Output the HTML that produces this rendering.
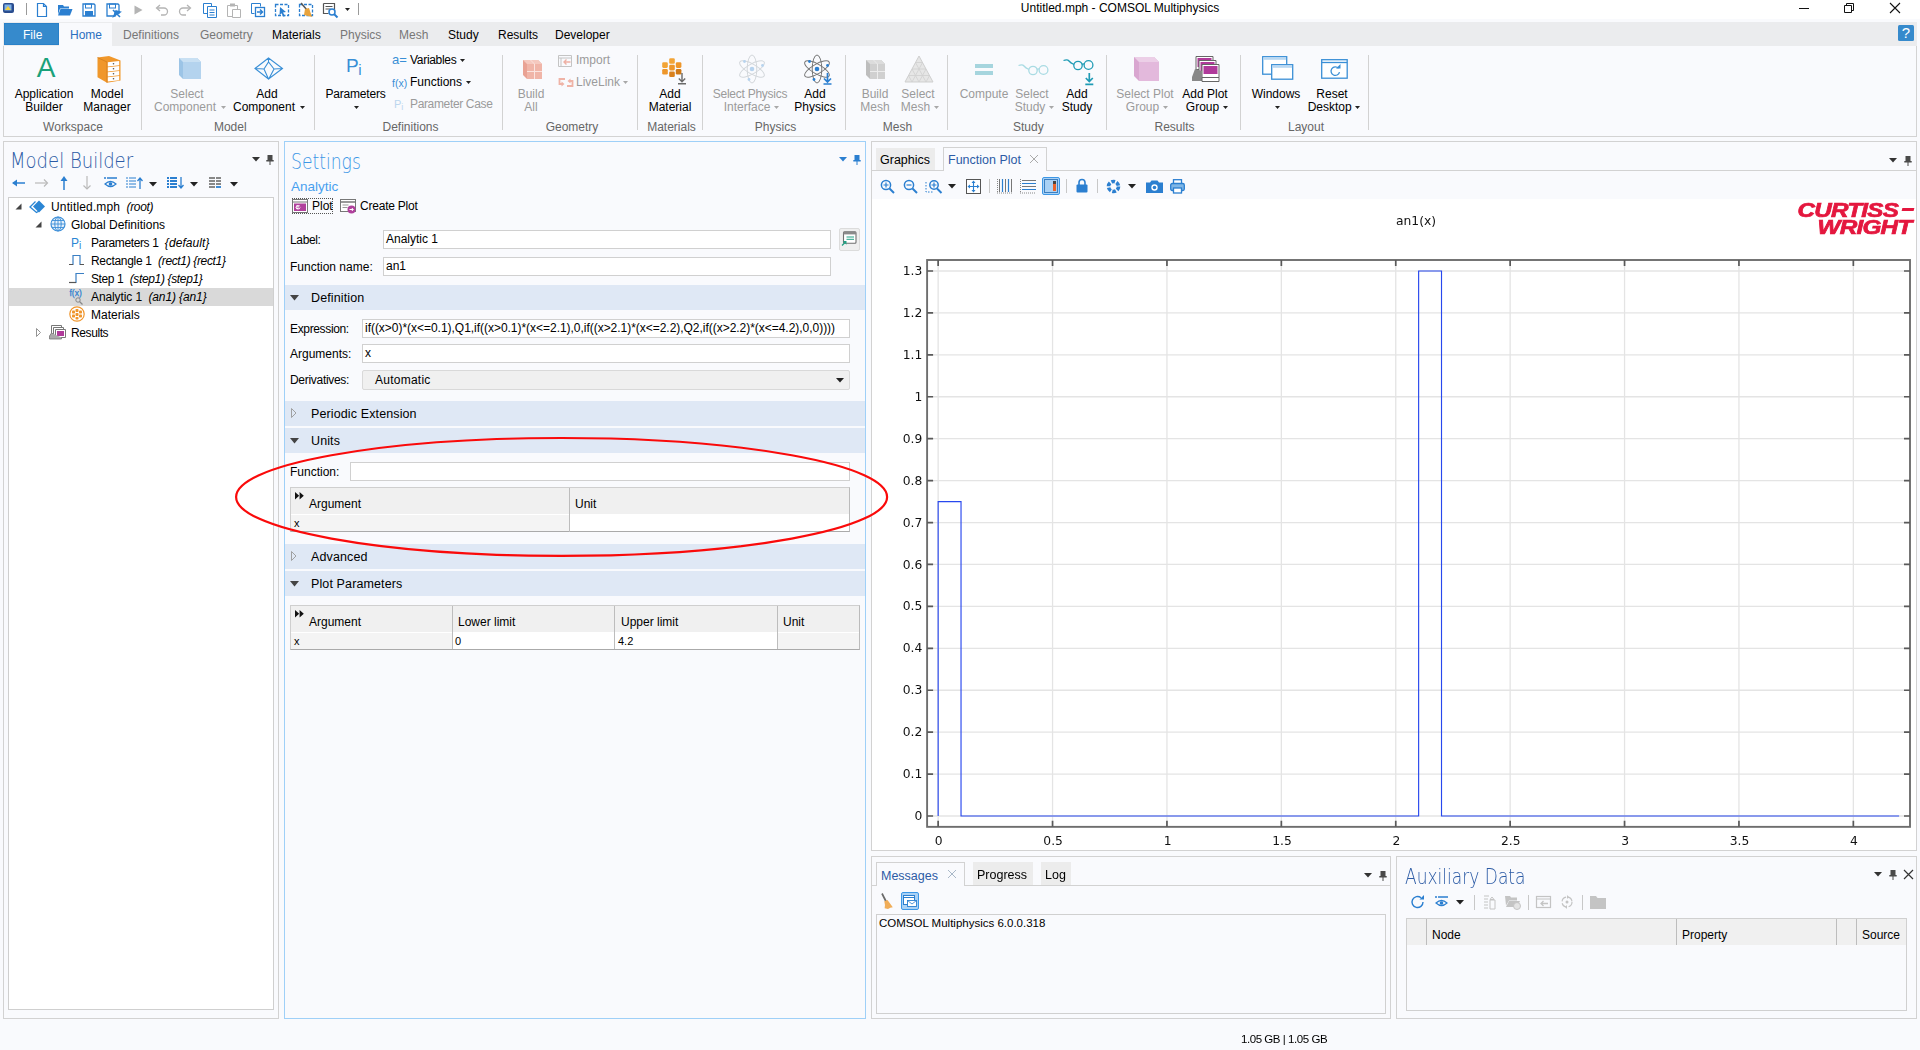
<!DOCTYPE html>
<html><head><meta charset="utf-8"><title>Untitled.mph - COMSOL Multiphysics</title>
<style>
*{box-sizing:border-box;margin:0;padding:0}
html,body{width:1920px;height:1050px;overflow:hidden}
body{background:#f9fafd;font-family:"Liberation Sans",sans-serif;font-size:12px;color:#000;position:relative}
.a{position:absolute;white-space:nowrap}
.t{position:absolute;white-space:nowrap;line-height:14px;height:14px}
.c{text-align:center}
.g{color:#9b9b9b}
.gl{color:#666}
.box{position:absolute;border:1px solid #d0d0d0}
.sep{position:absolute;width:1px;background:#d4d4d4}
.band{position:absolute;left:285px;width:580px;background:#dfe8f5}
.inp{position:absolute;background:#fff;border:1px solid #d0d0d0}
.hdr{position:absolute;background:#f0f0f0}
svg{position:absolute;overflow:visible}
.ttl{position:absolute;white-space:nowrap;font-family:"DejaVu Sans","Liberation Sans",sans-serif;font-weight:200;font-size:20.5px;line-height:26px;transform-origin:left center}
.t i{letter-spacing:-0.35px;margin-left:3px}
.dj{font-family:"DejaVu Sans",sans-serif}
</style></head>
<body>
<div class="a" style="left:0px;top:0px;width:1920px;height:19px;background:#fff"></div>
<div class="t c " style="left:1020px;width:200px;top:1px;font-size:12px">Untitled.mph - COMSOL Multiphysics</div>
<svg style="left:1799px;top:3px" width="10" height="10" viewBox="0 0 10 10"><path d="M0 5.5h10" stroke="#111" stroke-width="1"/></svg>
<svg style="left:1844px;top:3px" width="10" height="10" viewBox="0 0 10 10"><path d="M0.5 2.5h7v7h-7z M2.5 2.5v-2h7v7h-2" fill="none" stroke="#111" stroke-width="1"/></svg>
<svg style="left:1890px;top:3px" width="10" height="10" viewBox="0 0 10 10"><path d="M0 0l10 10M10 0l-10 10" stroke="#111" stroke-width="1.1"/></svg>
<svg style="left:3px;top:3px" width="12" height="11" viewBox="0 0 12 11"><rect x="0" y="0" width="11" height="10" rx="2" fill="#2a4d8f"/><rect x="1.5" y="1.5" width="7" height="6" fill="#7fb2e8"/><path d="M2 7l3-4 3 4z" fill="#f0d040"/></svg>
<div class="a" style="left:26px;top:3px;width:1px;height:12px;background:#9a9a9a"></div>
<div class="a" style="left:358px;top:3px;width:1px;height:12px;background:#9a9a9a"></div>
<svg style="left:34px;top:2px" width="16" height="16" viewBox="0 0 16 16"><path d="M3.5 1.5h6l3 3v10h-9z M9.5 1.5v3h3" fill="#fff" stroke="#2b7fd0" stroke-width="1.2"/></svg>
<svg style="left:57px;top:2px" width="16" height="16" viewBox="0 0 16 16"><path d="M1 3h5l1 1.5h5v2h-9l-2 6z" fill="#2b7fd0"/><path d="M3.5 7h12l-2.5 6.5h-12z" fill="#2b7fd0"/></svg>
<svg style="left:81px;top:2px" width="16" height="16" viewBox="0 0 16 16"><path d="M2 2h11l1 1v11h-12z" fill="#fff" stroke="#2b7fd0" stroke-width="1.3"/><rect x="4.5" y="2" width="6" height="4" fill="none" stroke="#2b7fd0"/><rect x="4" y="9" width="8" height="5" fill="#2b7fd0"/></svg>
<svg style="left:105px;top:2px" width="16" height="16" viewBox="0 0 16 16"><path d="M2 2h11l1 1v8h-4v3h-8z" fill="#fff" stroke="#2b7fd0" stroke-width="1.3"/><rect x="4.5" y="2" width="6" height="4" fill="none" stroke="#2b7fd0"/><path d="M8 8l7 7M9 14l2-5 4 1z" stroke="#2b7fd0" stroke-width="1.6" fill="#2b7fd0"/></svg>
<svg style="left:130px;top:2px" width="16" height="16" viewBox="0 0 16 16"><path d="M4.5 3.5l8 4.5-8 4.5z" fill="#b4b4b4"/></svg>
<svg style="left:154px;top:2px" width="16" height="16" viewBox="0 0 16 16"><path d="M3 6h7a3.5 3.5 0 0 1 0 7h-3" fill="none" stroke="#b4b4b4" stroke-width="1.3"/><path d="M6 3l-3.5 3 3.5 3" fill="none" stroke="#b4b4b4" stroke-width="1.3"/></svg>
<svg style="left:177px;top:2px" width="16" height="16" viewBox="0 0 16 16"><path d="M13 6h-7a3.5 3.5 0 0 0 0 7h3" fill="none" stroke="#b4b4b4" stroke-width="1.3"/><path d="M10 3l3.5 3-3.5 3" fill="none" stroke="#b4b4b4" stroke-width="1.3"/></svg>
<svg style="left:202px;top:2px" width="16" height="16" viewBox="0 0 16 16"><path d="M1.5 1.5h8v10h-8z" fill="#fff" stroke="#2b7fd0"/><path d="M5.5 4.500h9v11h-9z" fill="#fff" stroke="#2b7fd0"/><path d="M7.500 8h5M7.500 10.500h5M7.500 13h5" stroke="#2b7fd0"/></svg>
<svg style="left:226px;top:2px" width="16" height="16" viewBox="0 0 16 16"><path d="M1.5 3.500h10v11h-10z" fill="#fff" stroke="#b4b4b4"/><rect x="4" y="1.500" width="5" height="3" fill="#b4b4b4"/><path d="M6.500 7.500h8v8h-8z" fill="#fff" stroke="#b4b4b4"/></svg>
<svg style="left:250px;top:2px" width="16" height="16" viewBox="0 0 16 16"><path d="M1.5 1.5h9v3M1.500 1.500v10h3" fill="none" stroke="#2b7fd0"/><rect x="5.500" y="5.500" width="9" height="9" fill="#fff" stroke="#2b7fd0" stroke-width="1.3"/><path d="M7 10h5M10 7.500l2.500 2.500-2.500 2.500" fill="none" stroke="#2b7fd0" stroke-width="1.5"/></svg>
<svg style="left:274px;top:2px" width="16" height="16" viewBox="0 0 16 16"><rect x="1.5" y="2.500" width="13" height="11" fill="none" stroke="#2b7fd0" stroke-width="1.3" stroke-dasharray="3 1.500"/><path d="M6 5l6 5-3 .5 2 3.500-1.500.8-2-3.500-2 2z" fill="#2b7fd0"/></svg>
<svg style="left:298px;top:2px" width="16" height="16" viewBox="0 0 16 16"><rect x="1.5" y="2.500" width="13" height="11" fill="none" stroke="#2b7fd0" stroke-width="1.3" stroke-dasharray="3 1.500"/><path d="M3 1l6 7" stroke="#555" stroke-width="1.5"/><path d="M7 7l4-1 3 9-8-2z" fill="#e8a33c"/></svg>
<svg style="left:322px;top:2px" width="16" height="16" viewBox="0 0 16 16"><path d="M1.5 1.500h11v7M1.500 1.500v10h5" fill="none" stroke="#555" stroke-width="1.2"/><path d="M3.500 4.500h7M3.500 7h5" stroke="#555"/><circle cx="10" cy="10" r="3" fill="#fff" stroke="#2b7fd0" stroke-width="1.5"/><path d="M12 12l3.500 3.500" stroke="#2b7fd0" stroke-width="2"/></svg>
<svg style="left:345px;top:8px" width="5" height="3" viewBox="0 0 5 3"><path d="M0 0h5l-2.5 3z" fill="#222"/></svg>
<div class="a" style="left:3px;top:22px;width:1914px;height:24px;background:#ebecee"></div>
<div class="a" style="left:4px;top:23px;width:55px;height:22px;background:#368acc;border:1px solid #2a81c8"></div>
<div class="a" style="left:59px;top:23px;width:53px;height:23px;background:#f9fafd"></div>
<div class="t " style="left:23px;top:28px;font-size:12px;color:#fff;">File</div>
<div class="t " style="left:70px;top:28px;font-size:12px;color:#2b6fc0;">Home</div>
<div class="t " style="left:123px;top:28px;font-size:12px;color:#777;">Definitions</div>
<div class="t " style="left:200px;top:28px;font-size:12px;color:#777;">Geometry</div>
<div class="t " style="left:272px;top:28px;font-size:12px;">Materials</div>
<div class="t " style="left:340px;top:28px;font-size:12px;color:#777;">Physics</div>
<div class="t " style="left:399px;top:28px;font-size:12px;color:#777;">Mesh</div>
<div class="t " style="left:448px;top:28px;font-size:12px;">Study</div>
<div class="t " style="left:498px;top:28px;font-size:12px;">Results</div>
<div class="t " style="left:555px;top:28px;font-size:12px;">Developer</div>
<div class="a" style="left:1898px;top:25px;width:16px;height:16px;background:#368acc;border-radius:1.5px"></div>
<div class="t c" style="left:1898px;top:26px;color:#fff;width:16px;font-size:15px;line-height:16px;height:16px;top:25px">?</div>
<div class="a" style="left:3px;top:46px;width:1914px;height:91px;background:#f9fafd;border:1px solid #d3d3d3;border-top:none"></div>
<div class="a" style="left:141px;top:55px;width:1px;height:75px;background:#d2d2d2"></div>
<div class="a" style="left:314px;top:55px;width:1px;height:75px;background:#d2d2d2"></div>
<div class="a" style="left:502px;top:55px;width:1px;height:75px;background:#d2d2d2"></div>
<div class="a" style="left:637px;top:55px;width:1px;height:75px;background:#d2d2d2"></div>
<div class="a" style="left:702px;top:55px;width:1px;height:75px;background:#d2d2d2"></div>
<div class="a" style="left:845px;top:55px;width:1px;height:75px;background:#d2d2d2"></div>
<div class="a" style="left:947px;top:55px;width:1px;height:75px;background:#d2d2d2"></div>
<div class="a" style="left:1106px;top:55px;width:1px;height:75px;background:#d2d2d2"></div>
<div class="a" style="left:1240px;top:55px;width:1px;height:75px;background:#d2d2d2"></div>
<div class="a" style="left:1368px;top:55px;width:1px;height:75px;background:#d2d2d2"></div>
<div class="t c gl" style="left:-27px;width:200px;top:120px;">Workspace</div>
<div class="t c gl" style="left:130.3px;width:200px;top:120px;">Model</div>
<div class="t c gl" style="left:310.5px;width:200px;top:120px;">Definitions</div>
<div class="t c gl" style="left:472px;width:200px;top:120px;">Geometry</div>
<div class="t c gl" style="left:571.5px;width:200px;top:120px;">Materials</div>
<div class="t c gl" style="left:675.5px;width:200px;top:120px;">Physics</div>
<div class="t c gl" style="left:797.5px;width:200px;top:120px;">Mesh</div>
<div class="t c gl" style="left:928.3px;width:200px;top:120px;">Study</div>
<div class="t c gl" style="left:1074.5px;width:200px;top:120px;">Results</div>
<div class="t c gl" style="left:1206px;width:200px;top:120px;">Layout</div>
<div class="t c " style="left:-56px;width:200px;top:87px;">Application</div>
<div class="t c " style="left:-56px;width:200px;top:100px;">Builder</div>
<div class="t c " style="left:7px;width:200px;top:87px;">Model</div>
<div class="t c " style="left:7px;width:200px;top:100px;">Manager</div>
<div class="t c g" style="left:87px;width:200px;top:87px;">Select</div>
<div class="t c g" style="left:85px;width:200px;top:100px;">Component</div>
<div class="t c " style="left:167px;width:200px;top:87px;">Add</div>
<div class="t c " style="left:164px;width:200px;top:100px;">Component</div>
<div class="t c " style="left:255.5px;width:200px;top:87px;letter-spacing:-0.2px">Parameters</div>
<div class="t c g" style="left:431px;width:200px;top:87px;">Build</div>
<div class="t c g" style="left:431px;width:200px;top:100px;">All</div>
<div class="t c " style="left:570px;width:200px;top:87px;">Add</div>
<div class="t c " style="left:570px;width:200px;top:100px;">Material</div>
<div class="t c g" style="left:650px;width:200px;top:87px;letter-spacing:-0.25px">Select Physics</div>
<div class="t c g" style="left:647px;width:200px;top:100px;">Interface</div>
<div class="t c " style="left:715px;width:200px;top:87px;">Add</div>
<div class="t c " style="left:715px;width:200px;top:100px;">Physics</div>
<div class="t c g" style="left:775px;width:200px;top:87px;">Build</div>
<div class="t c g" style="left:775px;width:200px;top:100px;">Mesh</div>
<div class="t c g" style="left:818px;width:200px;top:87px;">Select</div>
<div class="t c g" style="left:815.5px;width:200px;top:100px;">Mesh</div>
<div class="t c g" style="left:884px;width:200px;top:87px;">Compute</div>
<div class="t c g" style="left:932px;width:200px;top:87px;">Select</div>
<div class="t c g" style="left:930px;width:200px;top:100px;">Study</div>
<div class="t c " style="left:977px;width:200px;top:87px;">Add</div>
<div class="t c " style="left:977px;width:200px;top:100px;">Study</div>
<div class="t c g" style="left:1045px;width:200px;top:87px;">Select Plot</div>
<div class="t c g" style="left:1042.5px;width:200px;top:100px;">Group</div>
<div class="t c " style="left:1105px;width:200px;top:87px;">Add Plot</div>
<div class="t c " style="left:1102.5px;width:200px;top:100px;">Group</div>
<div class="t c " style="left:1176px;width:200px;top:87px;">Windows</div>
<div class="t c " style="left:1232px;width:200px;top:87px;">Reset</div>
<div class="t c " style="left:1229.7px;width:200px;top:100px;">Desktop</div>
<svg style="left:221px;top:106px" width="5" height="3" viewBox="0 0 5 3"><path d="M0 0h5l-2.5 3z" fill="#a8a8a8"/></svg>
<svg style="left:300px;top:106px" width="5" height="3" viewBox="0 0 5 3"><path d="M0 0h5l-2.5 3z" fill="#222"/></svg>
<svg style="left:353.5px;top:106px" width="5" height="3" viewBox="0 0 5 3"><path d="M0 0h5l-2.5 3z" fill="#222"/></svg>
<svg style="left:774px;top:106px" width="5" height="3" viewBox="0 0 5 3"><path d="M0 0h5l-2.5 3z" fill="#a8a8a8"/></svg>
<svg style="left:933.5px;top:106px" width="5" height="3" viewBox="0 0 5 3"><path d="M0 0h5l-2.5 3z" fill="#a8a8a8"/></svg>
<svg style="left:1048.5px;top:106px" width="5" height="3" viewBox="0 0 5 3"><path d="M0 0h5l-2.5 3z" fill="#a8a8a8"/></svg>
<svg style="left:1163px;top:106px" width="5" height="3" viewBox="0 0 5 3"><path d="M0 0h5l-2.5 3z" fill="#a8a8a8"/></svg>
<svg style="left:1223px;top:106px" width="5" height="3" viewBox="0 0 5 3"><path d="M0 0h5l-2.5 3z" fill="#222"/></svg>
<svg style="left:1275px;top:106px" width="5" height="3" viewBox="0 0 5 3"><path d="M0 0h5l-2.5 3z" fill="#222"/></svg>
<svg style="left:1355px;top:106px" width="5" height="3" viewBox="0 0 5 3"><path d="M0 0h5l-2.5 3z" fill="#222"/></svg>
<div class="t " style="left:410px;top:53px;letter-spacing:-0.3px">Variables</div>
<svg style="left:460px;top:59px" width="5" height="3" viewBox="0 0 5 3"><path d="M0 0h5l-2.5 3z" fill="#222"/></svg>
<div class="t " style="left:410px;top:75px;">Functions</div>
<svg style="left:466px;top:81px" width="5" height="3" viewBox="0 0 5 3"><path d="M0 0h5l-2.5 3z" fill="#222"/></svg>
<div class="t g" style="left:410px;top:97px;letter-spacing:-0.35px">Parameter Case</div>
<div class="t g" style="left:576px;top:53px;">Import</div>
<div class="t g" style="left:576px;top:75px;">LiveLink</div>
<svg style="left:623px;top:81px" width="5" height="3" viewBox="0 0 5 3"><path d="M0 0h5l-2.5 3z" fill="#a8a8a8"/></svg>
<div class="a" style="left:31px;top:52px;width:30px;text-align:center;font-size:28px;line-height:32px;color:#1aa17a">A</div>
<svg style="left:97px;top:56px" width="24" height="27" viewBox="0 0 24 27"><path d="M.5 1.500l11.500-1.500 11.500 4.500v20l-13.500 2.300-9.500-5.500z" fill="#f0972b"/><path d="M.5 1.500l9.500 4.500v20.800" fill="none" stroke="#d07a18" stroke-width=".7"/><path d="M10.800 6.3l11.400-1.300v4.200l-11.400 1.300z" fill="#fff"/><circle cx="16.500" cy="7.8" r=".8" fill="#555"/><path d="M10.800 11.3l11.400-1.300v4.200l-11.400 1.300z" fill="#fff"/><circle cx="16.500" cy="12.8" r=".8" fill="#555"/><path d="M10.800 16.3l11.400-1.300v4.200l-11.400 1.300z" fill="#fff"/><circle cx="16.500" cy="17.8" r=".8" fill="#555"/><path d="M10.800 21.3l11.400-1.300v4.200l-11.400 1.300z" fill="#fff"/><circle cx="16.500" cy="22.8" r=".8" fill="#555"/></svg>
<svg style="left:179px;top:58px" width="22" height="21" viewBox="0 0 22 21"><path d="M0 0h18l4 4v17h-18l-4 -4z" fill="#9cc4e6"/><path d="M0 0h18l4 4h-18z" fill="#c9e0f3"/><rect x="4" y="4" width="18" height="17" fill="#b4d3ee"/></svg>
<svg style="left:254px;top:57px" width="30" height="23" viewBox="0 0 30 23"><path d="M1 11.500l13.500-10.500 14 10.500-14 10.500z M1 11.500l9 .5M10 12l4.500-7 5.500 7-5.500 10.500M10 12l4.500 10M14.500 1v4M20 12l8.500-.5" fill="none" stroke="#3a8fd6" stroke-width="1.100"/></svg>
<div class="a" style="left:346px;top:54px;font-size:19px;line-height:24px;color:#3a8fd6">P<span style="font-size:15px;position:relative;top:3px;left:-0.5px">i</span></div>
<div class="a" style="left:392px;top:52px;font-size:13px;line-height:16px;color:#3a8fd6">a=</div>
<div class="a" style="left:392px;top:76px;font-size:10.5px;line-height:14px;color:#3a8fd6">f(x)</div>
<div class="a" style="left:394px;top:97px;font-size:11px;line-height:14px;color:#bcd6ee">P<span style="font-size:9px;position:relative;top:2px">i</span></div>
<svg style="left:523px;top:60px" width="19" height="19" viewBox="0 0 19 19"><path d="M0 0h15l4 4v15h-15l-4 -4z" fill="#e9a294"/><path d="M0 0h15l4 4h-15z" fill="#f5c9bf"/><rect x="4" y="4" width="15" height="15" fill="#f0b5a8"/><path d="M11.5 4v15M4 11.5h15" stroke="#fbe4df" stroke-width="1" fill="none"/><path d="M7.5 0l4 4M0 0" stroke="#fbe4df" stroke-width=".8" fill="none"/></svg>
<svg style="left:558px;top:55px" width="14" height="12" viewBox="0 0 14 12"><path d="M.5 .500h13v11h-13z M.500 3h13M3 3v8.500" fill="none" stroke="#c4c4c4"/><path d="M12.500 7h-6M8.500 4.500l-2.500 2.500 2.500 2.500" fill="none" stroke="#eeb0a4" stroke-width="1.400"/></svg>
<svg style="left:558px;top:77px" width="16" height="11" viewBox="0 0 16 11"><path d="M7 2h-5.500v5h2.500M9 9h5.500v-5h-2.500" fill="none" stroke="#efb3a6" stroke-width="1.800"/><path d="M3.500 4.500l3 2.500-3 2.500zM12.500 1.500l-3 2.500 3 2.500z" fill="#efb3a6"/></svg>
<svg style="left:662px;top:58px" width="26" height="27" viewBox="0 0 26 27"><rect x="7.2" y="0.2" width="5.600" height="5.600" rx="1.300" fill="#f2a436"/><rect x="7.2" y="6.8" width="5.600" height="5.600" rx="1.300" fill="#ee962a"/><rect x="7.2" y="13.5" width="5.600" height="5.600" rx="1.300" fill="#d9801c"/><rect x="0.2" y="4.3" width="5.600" height="5.600" rx="1.300" fill="#f2a436"/><rect x="0.2" y="11.0" width="5.600" height="5.600" rx="1.300" fill="#ee962a"/><rect x="13.8" y="4.3" width="5.600" height="5.600" rx="1.300" fill="#ee962a"/><rect x="13.8" y="11.0" width="5.600" height="5.600" rx="1.300" fill="#cf7816"/><path d="M20 15v8.500M16.800 20.500l3.200 3.200 3.200-3.200M16 25.800h8" stroke="#6a6a6a" stroke-width="1.400" fill="none"/></svg>
<svg style="left:738px;top:54px" width="30" height="30" viewBox="0 0 30 30"><g fill="none" stroke="#d3d7db" stroke-width="1"><ellipse cx="14" cy="15" rx="4.800" ry="14"/><ellipse cx="14" cy="15" rx="4.800" ry="14" transform="rotate(60 14 15)"/><ellipse cx="14" cy="15" rx="4.800" ry="14" transform="rotate(-60 14 15)"/></g><circle cx="14" cy="15" r="2.300" fill="#b7d3ee"/><circle cx="6.500" cy="7.500" r="1.400" fill="#b7d3ee"/><circle cx="24.500" cy="11.500" r="1.400" fill="#b7d3ee"/><circle cx="11" cy="25.500" r="1.400" fill="#b7d3ee"/></svg>
<svg style="left:803px;top:54px" width="30" height="30" viewBox="0 0 30 30"><g fill="none" stroke="#777" stroke-width="1"><ellipse cx="14" cy="15" rx="4.800" ry="14"/><ellipse cx="14" cy="15" rx="4.800" ry="14" transform="rotate(60 14 15)"/><ellipse cx="14" cy="15" rx="4.800" ry="14" transform="rotate(-60 14 15)"/></g><circle cx="14" cy="15" r="2.300" fill="#2b7fd0"/><circle cx="6.500" cy="7.500" r="1.400" fill="#2b7fd0"/><circle cx="24.500" cy="11.500" r="1.400" fill="#2b7fd0"/><circle cx="11" cy="25.500" r="1.400" fill="#2b7fd0"/><path d="M24.500 19v8.500M21 24.500l3.500 3.500 3.500-3.500M20.500 30h8" stroke="#2b7fd0" stroke-width="1.700" fill="none"/></svg>
<svg style="left:866px;top:60px" width="19" height="19" viewBox="0 0 19 19"><path d="M0 0h15l4 4v15h-15l-4 -4z" fill="#bdbdbd"/><path d="M0 0h15l4 4h-15z" fill="#dcdcdc"/><rect x="4" y="4" width="15" height="15" fill="#d0d0d0"/><path d="M11.5 4v15M4 11.5h15" stroke="#ececec" stroke-width="1" fill="none"/><path d="M7.5 0l4 4M0 0" stroke="#ececec" stroke-width=".8" fill="none"/></svg>
<svg style="left:904px;top:55px" width="30" height="28" viewBox="0 0 30 28"><path d="M15 1l14 26h-28z" fill="#e6e6e6" stroke="#cfcfcf"/><path d="M8 14h14M4.500 20.500h21M11.500 7.500h7M8 14l3.500 6.500 3.500-6.500 3.500 6.500 3.500-6.500M11.500 7.500l3.500 6.500 3.500-6.500M4.500 20.500l3.500 6.500 3.500-6.500 3.500 6.500 3.500-6.500 3.500 6.500 3.500-6.500" stroke="#cfcfcf" fill="none" stroke-width=".8"/></svg>
<svg style="left:975px;top:64px" width="18" height="12" viewBox="0 0 18 12"><rect x="0" y="0" width="18" height="4" fill="#a6d5de"/><rect x="0" y="7" width="18" height="4" fill="#a6d5de"/></svg>
<svg style="left:1017.5px;top:59.5px" width="32" height="30" viewBox="0 0 32 30"><g fill="none" stroke="#a9dbe3" stroke-width="1.300"><circle cx="15" cy="10.500" r="4.200"/><circle cx="25.500" cy="10" r="4.400"/><path d="M19 9.500q1.200-1.200 2.300-.3M11 9.500q-3.500-1.500-5-3.500t-5.500-.500"/></g></svg>
<svg style="left:1063px;top:55px" width="32" height="30" viewBox="0 0 32 30"><g fill="none" stroke="#1f9bb5" stroke-width="1.300"><circle cx="15" cy="10.500" r="4.200"/><circle cx="25.500" cy="10" r="4.400"/><path d="M19 9.500q1.200-1.200 2.300-.3M11 9.500q-3.500-1.500-5-3.500t-5.500-.500"/></g><path d="M26.300 18v8M22.800 23l3.500 3.500 3.500-3.500M22.300 29.300h8" stroke="#1f9bb5" stroke-width="1.700" fill="none"/></svg>
<svg style="left:1134px;top:57px" width="25" height="24" viewBox="0 0 25 24"><path d="M0 0h20l5 5v19h-20l-5 -5z" fill="#d9a6d0"/><path d="M0 0h20l5 5h-20z" fill="#eccfe7"/><rect x="5" y="5" width="20" height="19" fill="#e3b9dc"/></svg>
<svg style="left:1191px;top:55px" width="30" height="28" viewBox="0 0 30 28"><path d="M5 1.500h17v13h-17z" fill="#fff" stroke="#666"/><rect x="6.5" y="3" width="14" height="9" fill="#b03a9a"/><path d="M8 5.500h17v13h-17z" fill="#fff" stroke="#666"/><rect x="9.500" y="7" width="14" height="9" fill="#b03a9a"/><path d="M11 9.500h17v13h-17z" fill="#fff" stroke="#666"/><rect x="12.500" y="11" width="14" height="8" fill="#b03a9a"/><path d="M4 14l-3 8v4h10v-10z" fill="#888"/><path d="M11 22.500h17v4h-17z" fill="#fff" stroke="#666"/></svg>
<svg style="left:1262px;top:56px" width="32" height="24" viewBox="0 0 32 24"><rect x=".7" y=".7" width="24" height="17.500" fill="#fff" stroke="#3a8fd6" stroke-width="1.300"/><rect x="1.300" y="1.300" width="22.800" height="2.500" fill="#b9d8f2"/><rect x="9.700" y="8.700" width="21" height="14.500" fill="#fff" stroke="#3a8fd6" stroke-width="1.300"/><rect x="10.300" y="9.300" width="19.800" height="2.500" fill="#b9d8f2"/></svg>
<svg style="left:1320.5px;top:59px" width="28" height="20" viewBox="0 0 28 20"><rect x=".7" y=".7" width="25.500" height="18.500" fill="#fff" stroke="#3a8fd6" stroke-width="1.300"/><path d="M.7 3.500h25.500" stroke="#3a8fd6" stroke-width="1.300"/><path d="M17.500 9.200a4.300 4.300 0 1 0 1 4" fill="none" stroke="#3a8fd6" stroke-width="1.300"/><path d="M15 9.500h4.500v-4.500z" fill="#3a8fd6"/></svg>
<div class="a" style="left:3px;top:141px;width:276px;height:878px;border:1px solid #d2d2d2"></div>
<div class="ttl" style="left:10px;top:148px;color:#2c5ba5;transform:scaleX(0.88)">Model Builder</div>
<svg style="left:252px;top:157px" width="8" height="5" viewBox="0 0 8 5"><path d="M0 0h8l-4 4.400z" fill="#333"/></svg>
<svg style="left:266px;top:154px" width="8" height="10" viewBox="0 0 8 10"><path d="M1.5 1h5v5h1.200v1.500h-7.400v-1.500h1.200z M3.500 7.500h1v3.500h-1z" fill="#4a4a4a"/></svg>
<svg style="left:12px;top:178px" width="14" height="10" viewBox="0 0 14 10"><path d="M1 5h12" stroke="#2b7fd0" stroke-width="1.5"/><path d="M0 5l5-3.500v7z" fill="#2b7fd0"/></svg>
<svg style="left:34px;top:178px" width="14" height="10" viewBox="0 0 14 10"><path d="M1 5h12" stroke="#b9b9b9" stroke-width="1.2"/><path d="M10 1.500l3.500 3.500-3.500 3.500" stroke="#b9b9b9" fill="none" stroke-width="1.2"/></svg>
<svg style="left:59px;top:176px" width="10" height="14" viewBox="0 0 10 14"><path d="M5 2v12" stroke="#2b7fd0" stroke-width="1.500"/><path d="M5 0l3.500 5h-7z" fill="#2b7fd0"/></svg>
<svg style="left:82px;top:176px" width="10" height="14" viewBox="0 0 10 14"><path d="M5 0v12" stroke="#b9b9b9" stroke-width="1.200"/><path d="M1.500 9.500l3.500 3.500 3.500-3.500" stroke="#b9b9b9" fill="none" stroke-width="1.2"/></svg>
<svg style="left:103px;top:177px" width="15" height="11" viewBox="0 0 15 11"><path d="M1 1h2M4 1h10" stroke="#2b7fd0" stroke-width="1.500"/><path d="M2 7q5.500-5 11 0q-5.500 5-11 0z" fill="none" stroke="#2b7fd0" stroke-width="1.2"/><circle cx="7.500" cy="7" r="1.800" fill="#2b7fd0"/></svg>
<svg style="left:126px;top:177px" width="17" height="13" viewBox="0 0 17 13"><path d="M0 1h2M3 1h7M0 4h2M3 4h7M0 7h2M3 7h7M0 10h2M3 10h7" stroke="#2b7fd0" stroke-width="1.2"/><path d="M14 12v-11M11.500 4l2.500-3 2.500 3" stroke="#2b7fd0" stroke-width="1.300" fill="none"/></svg>
<svg style="left:149px;top:182px" width="8" height="5" viewBox="0 0 8 5"><path d="M0 0h8l-4 4.400z" fill="#222"/></svg>
<svg style="left:167px;top:177px" width="17" height="13" viewBox="0 0 17 13"><path d="M0 1h2M3 1h7M0 4h2M3 4h7M0 7h2M3 7h7M0 10h2M3 10h7" stroke="#2b7fd0" stroke-width="2"/><path d="M14 0v11M11.500 8l2.500 3 2.500-3" stroke="#2b7fd0" stroke-width="1.300" fill="none"/></svg>
<svg style="left:190px;top:182px" width="8" height="5" viewBox="0 0 8 5"><path d="M0 0h8l-4 4.400z" fill="#222"/></svg>
<svg style="left:209px;top:177px" width="13" height="13" viewBox="0 0 13 13"><path d="M0 1h6M7 1h5M0 4h6M7 4h5M0 7h6M7 7h5M0 10h6" stroke="#888" stroke-width="1.8"/><path d="M7 10h5" stroke="#2b7fd0" stroke-width="1.800"/></svg>
<svg style="left:230px;top:182px" width="8" height="5" viewBox="0 0 8 5"><path d="M0 0h8l-4 4.400z" fill="#222"/></svg>
<div class="a" style="left:8px;top:197px;width:266px;height:813px;background:#fff;border:1px solid #cfcfcf"></div>
<div class="a" style="left:9px;top:288px;width:264px;height:18px;background:#d9d9d9"></div>
<div class="t " style="left:51px;top:200px;"><span style="letter-spacing:0.15px">Untitled.mph</span> <i>(root)</i></div>
<div class="t " style="left:71px;top:218px;">Global Definitions</div>
<div class="t " style="left:91px;top:236px;"><span style="letter-spacing:-0.38px">Parameters 1</span> <i style="letter-spacing:0.07px">{default}</i></div>
<div class="t " style="left:91px;top:254px;"><span style="letter-spacing:-0.3px">Rectangle 1</span> <i>(rect1) {rect1}</i></div>
<div class="t " style="left:91px;top:272px;"><span style="letter-spacing:-0.4px">Step 1</span> <i>(step1) {step1}</i></div>
<div class="t " style="left:91px;top:290px;"><span style="letter-spacing:-0.1px">Analytic 1</span> <i style="letter-spacing:-0.11px">(an1) {an1}</i></div>
<div class="t " style="left:91px;top:308px;">Materials</div>
<div class="t " style="left:71px;top:326px;"><span style="letter-spacing:-0.4px">Results</span></div>
<svg style="left:15px;top:203px" width="7" height="7" viewBox="0 0 7 7"><path d="M6.500 .500v6h-6z" fill="#444"/></svg>
<svg style="left:35px;top:221px" width="7" height="7" viewBox="0 0 7 7"><path d="M6.500 .500v6h-6z" fill="#444"/></svg>
<svg style="left:36px;top:328px" width="5" height="9" viewBox="0 0 5 9"><path d="M.5 .500l4 4-4 4z" fill="#fff" stroke="#888" stroke-width=".9"/></svg>
<svg style="left:29px;top:200px" width="17" height="14" viewBox="0 0 17 14"><path d="M10 .5l6 6-6 6-6-6z" fill="#2b86d4"/><path d="M6.500 1.500l-5.500 5.500 6.500 5.500 2.500-1.500" fill="none" stroke="#2b86d4" stroke-width="1.300"/></svg>
<svg style="left:50px;top:216px" width="16" height="16" viewBox="0 0 16 16"><circle cx="8" cy="8" r="7" fill="#e6f1fb" stroke="#3d8fd8" stroke-width="1.2"/><ellipse cx="8" cy="8" rx="3.2" ry="7" fill="none" stroke="#3d8fd8"/><path d="M1 8h14M2 4.500h12M2 11.500h12M8 1v14" stroke="#3d8fd8" stroke-width=".9"/></svg>
<div class="a" style="left:71px;top:236px;font-size:12px;line-height:14px;color:#2b86d4">P<span style="font-size:10px;position:relative;top:2px">i</span></div>
<svg style="left:69px;top:254px" width="16" height="12" viewBox="0 0 16 12"><path d="M0 10.500h4v-9h7v9h4" fill="none" stroke="#3a7fc4" stroke-width="1.2"/><path d="M0 10.500h4M11 10.500h4" stroke="#555" stroke-width="1.2"/></svg>
<svg style="left:69px;top:272px" width="16" height="12" viewBox="0 0 16 12"><path d="M0 10.500h7v-9h8" fill="none" stroke="#3a7fc4" stroke-width="1.2"/><path d="M0 10.500h7" stroke="#555" stroke-width="1.2"/></svg>
<div class="a" style="left:69.500px;top:288px;font-size:8.5px;line-height:10px;color:#2b7fd0;-webkit-text-stroke:0.25px #2b7fd0">f(x)</div>
<svg style="left:75px;top:297px" width="8" height="8" viewBox="0 0 8 8"><circle cx="3" cy="3" r="2.200" fill="none" stroke="#888"/><path d="M4.500 4.500l3 3" stroke="#888" stroke-width="1.300"/></svg>
<svg style="left:69px;top:306px" width="16" height="16" viewBox="0 0 16 16"><circle cx="8" cy="8" r="7.200" fill="#fff" stroke="#f0952b" stroke-width="1.2"/><g fill="#f0952b"><rect x="3" y="4.500" width="3" height="3" rx=".8"/><rect x="6.500" y="3" width="3" height="3" rx=".8"/><rect x="10" y="4.500" width="3" height="3" rx=".8"/><rect x="3" y="8.500" width="3" height="3" rx=".8"/><rect x="6.500" y="7" width="3" height="3" rx=".8"/><rect x="10" y="8.500" width="3" height="3" rx=".8"/><rect x="6.500" y="11" width="3" height="2.500" rx=".8"/></g></svg>
<svg style="left:49px;top:324px" width="17" height="16" viewBox="0 0 17 16"><path d="M2.500 1.500h10v8h-10z" fill="#fff" stroke="#777"/><path d="M4.500 3.500h10v8h-10z" fill="#fff" stroke="#777"/><path d="M6.500 5.500h10v8h-10z" fill="#fff" stroke="#777"/><rect x="8" y="7" width="7" height="5" fill="#b03a9a"/><path d="M2.500 9l-2 3v3h12v-1.500" fill="#aaa" stroke="#777" stroke-width=".8"/></svg>
<div class="a" style="left:284px;top:141px;width:582px;height:878px;border:1px solid #9fd0f8"></div>
<div class="ttl" style="left:291px;top:149px;color:#3c97e6;transform:scaleX(0.838)">Settings</div>
<svg style="left:839px;top:157px" width="8" height="5" viewBox="0 0 8 5"><path d="M0 0h8l-4 4.400z" fill="#2b7fd0"/></svg>
<svg style="left:853px;top:154px" width="8" height="10" viewBox="0 0 8 10"><path d="M1.5 1h5v5h1.200v1.500h-7.400v-1.500h1.200z M3.500 7.500h1v3.500h-1z" fill="#2b7fd0"/></svg>
<div class="t " style="left:291px;top:179px;font-size:13.5px;line-height:16px;height:16px;top:179px;color:#48a0ef">Analytic</div>
<div class="a" style="left:292px;top:198px;width:41px;height:16px;border:1px dotted #555"></div>
<svg style="left:292px;top:199px" width="16" height="14" viewBox="0 0 16 14"><rect x=".5" y=".500" width="15" height="13" fill="#fff" stroke="#777"/><path d="M.5 3h15" stroke="#777"/><rect x="2" y="4.500" width="12" height="7.500" fill="#b0409c"/><circle cx="6" cy="8.200" r="2.300" fill="#fff"/><path d="M4.500 8.200h3M6.800 7l1.200 1.200-1.200 1.200" stroke="#b0409c" stroke-width=".9" fill="none"/></svg>
<div class="t " style="left:312px;top:199px;">Plot</div>
<svg style="left:340px;top:199px" width="17" height="15" viewBox="0 0 17 15"><rect x=".5" y=".500" width="15" height="12" fill="#fff" stroke="#777"/><path d="M.5 3h15" stroke="#777" stroke-width="1.500"/><path d="M2.500 6h6M2.500 8.500h5" stroke="#999"/><circle cx="11.500" cy="10.500" r="4" fill="#b0409c"/><path d="M9.500 10.500h3.500M11.800 9l1.500 1.500-1.500 1.500" stroke="#fff" stroke-width="1" fill="none"/></svg>
<div class="t " style="left:360px;top:199px;letter-spacing:-0.22px">Create Plot</div>
<div class="t " style="left:290px;top:233px;letter-spacing:-0.35px">Label:</div>
<div class="a" style="left:383px;top:230px;width:448px;height:19px;background:#fff;border:1px solid #d0d0d0"></div>
<div class="t " style="left:386px;top:232px;">Analytic 1</div>
<div class="a" style="left:839px;top:228px;width:21px;height:23px;background:#efefef;border:1px solid #dcdcdc;border-radius:2px"></div>
<svg style="left:842px;top:231px" width="15" height="15" viewBox="0 0 15 15"><rect x="1.500" y=".800" width="12.500" height="11.500" rx="1" fill="#fff" stroke="#707070" stroke-width="1.100"/><rect x="1.500" y=".800" width="12.500" height="2.600" fill="#8a8a8a"/><path d="M4.500 6h7.500M4.500 8.300h7.500" stroke="#22a184" stroke-width="1"/><path d="M0 14.500l3.500-3.500" stroke="#22a184" stroke-width="1.300"/><path d="M.8 10h3.700v3.700z" fill="#22a184"/></svg>
<div class="t " style="left:290px;top:260px;">Function name:</div>
<div class="a" style="left:383px;top:257px;width:448px;height:19px;background:#fff;border:1px solid #d0d0d0"></div>
<div class="t " style="left:386px;top:259px;">an1</div>
<div class="a" style="left:285px;top:285px;width:580px;height:25px;background:#dfe8f5"></div>
<svg style="left:290px;top:295px" width="9" height="6" viewBox="0 0 9 6"><path d="M0 0h9l-4.500 5.500z" fill="#444"/></svg>
<div class="t " style="left:311px;top:290.5px;font-size:12.5px;letter-spacing:0.12px">Definition</div>
<div class="t " style="left:290px;top:322px;letter-spacing:-0.35px">Expression:</div>
<div class="a" style="left:362px;top:319px;width:488px;height:19px;background:#fff;border:1px solid #d0d0d0"></div>
<div class="t " style="left:365px;top:321px;font-size:12px;letter-spacing:-0.03px">if((x&gt;0)*(x&lt;=0.1),Q1,if((x&gt;0.1)*(x&lt;=2.1),0,if((x&gt;2.1)*(x&lt;=2.2),Q2,if((x&gt;2.2)*(x&lt;=4.2),0,0))))</div>
<div class="t " style="left:290px;top:347px;">Arguments:</div>
<div class="a" style="left:362px;top:344px;width:488px;height:19px;background:#fff;border:1px solid #d0d0d0"></div>
<div class="t " style="left:365px;top:346px;">x</div>
<div class="t " style="left:290px;top:373px;letter-spacing:-0.3px">Derivatives:</div>
<div class="a" style="left:362px;top:370px;width:488px;height:20px;background:#f0f0f0;border:1px solid #d9d9d9;border-radius:2px"></div>
<div class="t " style="left:375px;top:373px;letter-spacing:0.25px">Automatic</div>
<svg style="left:836px;top:378px" width="8" height="5" viewBox="0 0 8 5"><path d="M0 0h8l-4 4.400z" fill="#222"/></svg>
<div class="a" style="left:285px;top:401px;width:580px;height:25px;background:#dfe8f5"></div>
<svg style="left:291px;top:408px" width="6" height="10" viewBox="0 0 6 10"><path d="M.5 .500l4.500 4.500-4.500 4.500z" fill="none" stroke="#999" stroke-width=".9"/></svg>
<div class="t " style="left:311px;top:407px;font-size:12.5px;letter-spacing:0.12px">Periodic Extension</div>
<div class="a" style="left:285px;top:428px;width:580px;height:25px;background:#dfe8f5"></div>
<svg style="left:290px;top:438px" width="9" height="6" viewBox="0 0 9 6"><path d="M0 0h9l-4.500 5.500z" fill="#444"/></svg>
<div class="t " style="left:311px;top:433.5px;font-size:12.5px;letter-spacing:0.12px">Units</div>
<div class="t " style="left:290px;top:465px;">Function:</div>
<div class="a" style="left:350px;top:462px;width:500px;height:19px;background:#fff;border:1px solid #d0d0d0"></div>
<div class="a" style="left:290px;top:487px;width:560px;height:45px;background:#fff;border:1px solid #cfcfcf;border-bottom:1px solid #aaa;border-right:1px solid #bbb"></div>
<div class="a" style="left:291px;top:488px;width:558px;height:26px;background:#f0f0f0"></div>
<div class="a" style="left:291px;top:515px;width:278px;height:16px;background:#f4f4f4"></div>
<div class="a" style="left:569px;top:488px;width:1px;height:44px;background:#bdbdbd"></div>
<svg style="left:295px;top:491.5px" width="9" height="8" viewBox="0 0 9 8"><path d="M0 0l4.200 3.800-4.200 3.800zM4.600 0l4.200 3.800-4.200 3.800z" fill="#111"/></svg>
<div class="t " style="left:309px;top:497px;">Argument</div>
<div class="t " style="left:575px;top:497px;">Unit</div>
<div class="t " style="left:294px;top:516px;font-size:11px">x</div>
<div class="a" style="left:285px;top:544px;width:580px;height:25px;background:#dfe8f5"></div>
<svg style="left:291px;top:551px" width="6" height="10" viewBox="0 0 6 10"><path d="M.5 .500l4.500 4.500-4.500 4.500z" fill="none" stroke="#999" stroke-width=".9"/></svg>
<div class="t " style="left:311px;top:550px;font-size:12.5px;letter-spacing:0.12px">Advanced</div>
<div class="a" style="left:285px;top:571px;width:580px;height:25px;background:#dfe8f5"></div>
<svg style="left:290px;top:581px" width="9" height="6" viewBox="0 0 9 6"><path d="M0 0h9l-4.500 5.500z" fill="#444"/></svg>
<div class="t " style="left:311px;top:576.5px;font-size:12.5px;letter-spacing:0.12px">Plot Parameters</div>
<div class="a" style="left:290px;top:605px;width:570px;height:45px;background:#fff;border:1px solid #cfcfcf;border-bottom:1px solid #aaa;border-right:1px solid #bbb"></div>
<div class="a" style="left:291px;top:606px;width:568px;height:26px;background:#f0f0f0"></div>
<div class="a" style="left:291px;top:633px;width:161px;height:16px;background:#f4f4f4"></div>
<div class="a" style="left:778px;top:633px;width:81px;height:16px;background:#f4f4f4"></div>
<div class="a" style="left:452px;top:606px;width:1px;height:43px;background:#bdbdbd"></div>
<div class="a" style="left:614px;top:606px;width:1px;height:43px;background:#bdbdbd"></div>
<div class="a" style="left:777px;top:606px;width:1px;height:43px;background:#bdbdbd"></div>
<svg style="left:295px;top:609.5px" width="9" height="8" viewBox="0 0 9 8"><path d="M0 0l4.200 3.800-4.200 3.800zM4.600 0l4.200 3.800-4.200 3.800z" fill="#111"/></svg>
<div class="t " style="left:309px;top:615px;">Argument</div>
<div class="t " style="left:458px;top:615px;">Lower limit</div>
<div class="t " style="left:621px;top:615px;">Upper limit</div>
<div class="t " style="left:783px;top:615px;">Unit</div>
<div class="t " style="left:294px;top:634px;font-size:11px">x</div>
<div class="t " style="left:455px;top:634px;font-size:11px">0</div>
<div class="t " style="left:618px;top:634px;font-size:11px">4.2</div>
<div class="a" style="left:871px;top:141px;width:1046px;height:710px;border:1px solid #d2d2d2"></div>
<div class="a" style="left:876px;top:148px;width:59px;height:22px;background:#ececec"></div>
<div class="t " style="left:880px;top:153px;font-size:12.5px">Graphics</div>
<div class="a" style="left:872px;top:170px;width:1044px;height:1px;background:#d2d2d2"></div>
<div class="a" style="left:943px;top:147px;width:104px;height:24px;background:#f9fafd;border:1px solid #d2d2d2;border-bottom:none"></div>
<div class="t " style="left:948px;top:153px;font-size:12.5px;color:#2c5ba5">Function Plot</div>
<svg style="left:1030px;top:155px" width="8" height="8" viewBox="0 0 8 8"><path d="M0 0l8 8M8 0l-8 8" stroke="#aaa" stroke-width="1"/></svg>
<svg style="left:1889px;top:158px" width="8" height="5" viewBox="0 0 8 5"><path d="M0 0h8l-4 4.400z" fill="#333"/></svg>
<svg style="left:1904px;top:155px" width="8" height="10" viewBox="0 0 8 10"><path d="M1.5 1h5v5h1.200v1.500h-7.400v-1.500h1.200z M3.500 7.500h1v3.500h-1z" fill="#4a4a4a"/></svg>
<div class="a" style="left:872px;top:199px;width:1044px;height:651px;background:#fff"></div>
<svg style="left:880px;top:179px" width="15" height="15" viewBox="0 0 15 15"><circle cx="6" cy="6" r="4.600" fill="none" stroke="#2b7fd0" stroke-width="1.500"/><path d="M9.500 9.500l4.500 4.500" stroke="#2b7fd0" stroke-width="2"/><path d="M3.500 6h5M6 3.500v5" stroke="#2b7fd0" stroke-width="1.200"/></svg>
<svg style="left:903px;top:179px" width="15" height="15" viewBox="0 0 15 15"><circle cx="6" cy="6" r="4.600" fill="none" stroke="#2b7fd0" stroke-width="1.500"/><path d="M9.500 9.500l4.500 4.500" stroke="#2b7fd0" stroke-width="2"/><path d="M3.500 6h5" stroke="#2b7fd0" stroke-width="1.200"/></svg>
<svg style="left:925px;top:179px" width="17" height="15" viewBox="0 0 17 15"><path d="M1 3v10h8" fill="none" stroke="#2b7fd0" stroke-dasharray="1.500 1.500"/><circle cx="9" cy="6" r="4.200" fill="none" stroke="#2b7fd0" stroke-width="1.500"/><path d="M6.500 6h5M9 3.500v5" stroke="#2b7fd0" stroke-width="1.200"/><path d="M12 9.500l4.500 4.500" stroke="#2b7fd0" stroke-width="2"/></svg>
<svg style="left:948px;top:184px" width="8" height="5" viewBox="0 0 8 5"><path d="M0 0h8l-4 4.400z" fill="#222"/></svg>
<svg style="left:966px;top:179px" width="15" height="15" viewBox="0 0 15 15"><rect x=".5" y=".500" width="14" height="14" fill="#fff" stroke="#555"/><path d="M7.500 2.500v10M2.500 7.500h10" stroke="#2b7fd0" stroke-width="1.100"/><path d="M7.500 1.500l2 2.500h-4zM7.500 13.500l2-2.500h-4zM1.500 7.500l2.500-2v4zM13.500 7.500l-2.500-2v4z" fill="#2b7fd0"/></svg>
<div class="a" style="left:989px;top:179px;width:1px;height:14px;background:#c8c8c8"></div>
<svg style="left:997px;top:179px" width="16" height="15" viewBox="0 0 16 15"><path d="M2.500 0v13M8.500 0v13M14.500 0v13" stroke="#777" stroke-width="1"/><path d="M5.500 0v13M11.500 0v13" stroke="#2b7fd0" stroke-width="1.200"/><path d="M0 14h16M.5 0v14" stroke="#888" stroke-dasharray="1 1"/></svg>
<svg style="left:1020px;top:179px" width="16" height="15" viewBox="0 0 16 15"><path d="M2 1.500h14M2 7.500h14" stroke="#777" stroke-width="1"/><path d="M2 4.500h14M2 10.500h14" stroke="#2b7fd0" stroke-width="1.200"/><path d="M0 14h16M.5 0v14" stroke="#888" stroke-dasharray="1 1"/></svg>
<div class="a" style="left:1042px;top:177px;width:18px;height:18px;background:#a9d1f5;border:1px solid #3c97e6;border-radius:2px"></div>
<svg style="left:1044px;top:179px" width="14" height="14" viewBox="0 0 14 14"><rect x=".5" y=".500" width="13" height="13" fill="#a9d1f5" stroke="#3c7fc0"/><rect x="9" y="2" width="3" height="10" fill="#e8622a"/><rect x="9" y="2" width="3" height="3" fill="#444"/></svg>
<div class="a" style="left:1066px;top:179px;width:1px;height:14px;background:#c8c8c8"></div>
<svg style="left:1076px;top:179px" width="12" height="14" viewBox="0 0 12 14"><path d="M3 6v-2.500a3 3 0 0 1 6 0v2.500" fill="none" stroke="#2b7fd0" stroke-width="1.600"/><rect x=".5" y="5.500" width="11" height="8" rx="1" fill="#2b7fd0"/></svg>
<div class="a" style="left:1097px;top:179px;width:1px;height:14px;background:#c8c8c8"></div>
<svg style="left:1106px;top:179px" width="15" height="15" viewBox="0 0 15 15"><circle cx="7.500" cy="7.500" r="5" fill="none" stroke="#2b7fd0" stroke-width="3.600" stroke-dasharray="3.700 1.500"/></svg>
<svg style="left:1128px;top:184px" width="8" height="5" viewBox="0 0 8 5"><path d="M0 0h8l-4 4.400z" fill="#222"/></svg>
<svg style="left:1146px;top:180px" width="17" height="13" viewBox="0 0 17 13"><path d="M0 2.500h4l1.500-2h6l1.500 2h4v10.500h-17z" fill="#2b7fd0"/><circle cx="8.500" cy="7.500" r="3.200" fill="#fff"/><circle cx="8.500" cy="7.500" r="1.800" fill="#2b7fd0"/></svg>
<svg style="left:1170px;top:179px" width="15" height="15" viewBox="0 0 15 15"><rect x="3.500" y=".700" width="8" height="4" fill="#fff" stroke="#2b7fd0" stroke-width="1.300"/><rect x=".7" y="4.500" width="13.600" height="7" rx="1.500" fill="#7fb6e6" stroke="#2b7fd0" stroke-width="1.300"/><rect x="3.500" y="9" width="8" height="5" fill="#fff" stroke="#2b7fd0" stroke-width="1.300"/></svg>
<svg style="left:0;top:0;will-change:transform" width="1920" height="1050" viewBox="0 0 1920 1050" font-family="DejaVu Sans, sans-serif" font-size="12.3" fill="#111"><path d="M938.15 260V826.85" stroke="#e4e4e4" stroke-width="1.3"/><path d="M1052.55 260V826.85" stroke="#e4e4e4" stroke-width="1.3"/><path d="M1166.95 260V826.85" stroke="#e4e4e4" stroke-width="1.3"/><path d="M1281.35 260V826.85" stroke="#e4e4e4" stroke-width="1.3"/><path d="M1395.75 260V826.85" stroke="#e4e4e4" stroke-width="1.3"/><path d="M1510.15 260V826.85" stroke="#e4e4e4" stroke-width="1.3"/><path d="M1624.55 260V826.85" stroke="#e4e4e4" stroke-width="1.3"/><path d="M1738.95 260V826.85" stroke="#e4e4e4" stroke-width="1.3"/><path d="M1853.35 260V826.85" stroke="#e4e4e4" stroke-width="1.3"/><path d="M927.1 816.0H1910" stroke="#e4e4e4" stroke-width="1.3"/><path d="M927.1 774.08H1910" stroke="#e4e4e4" stroke-width="1.3"/><path d="M927.1 732.15H1910" stroke="#e4e4e4" stroke-width="1.3"/><path d="M927.1 690.23H1910" stroke="#e4e4e4" stroke-width="1.3"/><path d="M927.1 648.31H1910" stroke="#e4e4e4" stroke-width="1.3"/><path d="M927.1 606.38H1910" stroke="#e4e4e4" stroke-width="1.3"/><path d="M927.1 564.46H1910" stroke="#e4e4e4" stroke-width="1.3"/><path d="M927.1 522.54H1910" stroke="#e4e4e4" stroke-width="1.3"/><path d="M927.1 480.62H1910" stroke="#e4e4e4" stroke-width="1.3"/><path d="M927.1 438.69H1910" stroke="#e4e4e4" stroke-width="1.3"/><path d="M927.1 396.77H1910" stroke="#e4e4e4" stroke-width="1.3"/><path d="M927.1 354.85H1910" stroke="#e4e4e4" stroke-width="1.3"/><path d="M927.1 312.92H1910" stroke="#e4e4e4" stroke-width="1.3"/><path d="M927.1 271.0H1910" stroke="#e4e4e4" stroke-width="1.3"/><path d="M938.15 816.0 L938.15 501.58 L961.03 501.58 L961.03 816.0 L1418.63 816.0 L1418.63 271.0 L1441.51 271.0 L1441.51 816.0 L1899.11 816.0" fill="none" stroke="#2848ee" stroke-width="1.150"/><rect x="927.1" y="260" width="982.9" height="566.85" fill="none" stroke="#6e6e6e" stroke-width="1.900"/><path d="M938.15 260v6M938.15 826.85v-6" stroke="#5a5a5a" stroke-width="1.700"/><path d="M1052.55 260v6M1052.55 826.85v-6" stroke="#5a5a5a" stroke-width="1.700"/><path d="M1166.95 260v6M1166.95 826.85v-6" stroke="#5a5a5a" stroke-width="1.700"/><path d="M1281.35 260v6M1281.35 826.85v-6" stroke="#5a5a5a" stroke-width="1.700"/><path d="M1395.75 260v6M1395.75 826.85v-6" stroke="#5a5a5a" stroke-width="1.700"/><path d="M1510.15 260v6M1510.15 826.85v-6" stroke="#5a5a5a" stroke-width="1.700"/><path d="M1624.55 260v6M1624.55 826.85v-6" stroke="#5a5a5a" stroke-width="1.700"/><path d="M1738.95 260v6M1738.95 826.85v-6" stroke="#5a5a5a" stroke-width="1.700"/><path d="M1853.35 260v6M1853.35 826.85v-6" stroke="#5a5a5a" stroke-width="1.700"/><path d="M927.1 816.0h6M1910 816.0h-6" stroke="#5a5a5a" stroke-width="1.700"/><path d="M927.1 774.08h6M1910 774.08h-6" stroke="#5a5a5a" stroke-width="1.700"/><path d="M927.1 732.15h6M1910 732.15h-6" stroke="#5a5a5a" stroke-width="1.700"/><path d="M927.1 690.23h6M1910 690.23h-6" stroke="#5a5a5a" stroke-width="1.700"/><path d="M927.1 648.31h6M1910 648.31h-6" stroke="#5a5a5a" stroke-width="1.700"/><path d="M927.1 606.38h6M1910 606.38h-6" stroke="#5a5a5a" stroke-width="1.700"/><path d="M927.1 564.46h6M1910 564.46h-6" stroke="#5a5a5a" stroke-width="1.700"/><path d="M927.1 522.54h6M1910 522.54h-6" stroke="#5a5a5a" stroke-width="1.700"/><path d="M927.1 480.62h6M1910 480.62h-6" stroke="#5a5a5a" stroke-width="1.700"/><path d="M927.1 438.69h6M1910 438.69h-6" stroke="#5a5a5a" stroke-width="1.700"/><path d="M927.1 396.77h6M1910 396.77h-6" stroke="#5a5a5a" stroke-width="1.700"/><path d="M927.1 354.85h6M1910 354.85h-6" stroke="#5a5a5a" stroke-width="1.700"/><path d="M927.1 312.92h6M1910 312.92h-6" stroke="#5a5a5a" stroke-width="1.700"/><path d="M927.1 271.0h6M1910 271.0h-6" stroke="#5a5a5a" stroke-width="1.700"/><text x="922.3" y="820.1" text-anchor="end">0</text><text x="922.3" y="778.1800000000001" text-anchor="end">0.1</text><text x="922.3" y="736.25" text-anchor="end">0.2</text><text x="922.3" y="694.33" text-anchor="end">0.3</text><text x="922.3" y="652.41" text-anchor="end">0.4</text><text x="922.3" y="610.48" text-anchor="end">0.5</text><text x="922.3" y="568.5600000000001" text-anchor="end">0.6</text><text x="922.3" y="526.64" text-anchor="end">0.7</text><text x="922.3" y="484.72" text-anchor="end">0.8</text><text x="922.3" y="442.79" text-anchor="end">0.9</text><text x="922.3" y="400.87" text-anchor="end">1</text><text x="922.3" y="358.95000000000005" text-anchor="end">1.1</text><text x="922.3" y="317.02000000000004" text-anchor="end">1.2</text><text x="922.3" y="275.1" text-anchor="end">1.3</text><text x="938.75" y="844.900" text-anchor="middle">0</text><text x="1053.1499999999999" y="844.900" text-anchor="middle">0.5</text><text x="1167.55" y="844.900" text-anchor="middle">1</text><text x="1281.9499999999998" y="844.900" text-anchor="middle">1.5</text><text x="1396.35" y="844.900" text-anchor="middle">2</text><text x="1510.75" y="844.900" text-anchor="middle">2.5</text><text x="1625.1499999999999" y="844.900" text-anchor="middle">3</text><text x="1739.55" y="844.900" text-anchor="middle">3.5</text><text x="1853.9499999999998" y="844.900" text-anchor="middle">4</text><text x="1416" y="224.500" text-anchor="middle">an1(x)</text></svg>
<div id="lg1" class="a" style="right:22px;top:200.3px;color:#e4173e;font-weight:bold;font-style:italic;font-size:19.5px;line-height:20px;letter-spacing:-0.6px;-webkit-text-stroke:0.7px #e4173e;transform-origin:right center;transform:scaleX(1.24)">CURTISS</div>
<div class="a" style="left:1902px;top:207.5px;width:11.5px;height:3px;background:#e4173e;transform:skewX(-15deg)"></div>
<div id="lg2" class="a" style="right:8.799999999999955px;top:217.2px;color:#e4173e;font-weight:bold;font-style:italic;font-size:19.5px;line-height:20px;letter-spacing:-0.6px;-webkit-text-stroke:0.7px #e4173e;transform-origin:right center;transform:scaleX(1.245)">WRIGHT</div>
<div class="a" style="left:871px;top:856px;width:520px;height:163px;border:1px solid #d2d2d2"></div>
<div class="a" style="left:872px;top:885px;width:518px;height:1px;background:#d2d2d2"></div>
<div class="a" style="left:876px;top:862px;width:89px;height:24px;background:#f9fafd;border:1px solid #d2d2d2;border-bottom:none"></div>
<div class="t " style="left:881px;top:869px;font-size:12.5px;color:#2c5ba5">Messages</div>
<svg style="left:948px;top:870px" width="8" height="8" viewBox="0 0 8 8"><path d="M0 0l8 8M8 0l-8 8" stroke="#a9b8c8" stroke-width="1"/></svg>
<div class="a" style="left:973px;top:862px;width:60px;height:23px;background:#ececec"></div>
<div class="t " style="left:977px;top:868px;font-size:12.5px">Progress</div>
<div class="a" style="left:1041px;top:862px;width:30px;height:23px;background:#ececec"></div>
<div class="t " style="left:1045px;top:868px;font-size:12.5px">Log</div>
<svg style="left:1364px;top:873px" width="8" height="5" viewBox="0 0 8 5"><path d="M0 0h8l-4 4.400z" fill="#333"/></svg>
<svg style="left:1379px;top:870px" width="8" height="10" viewBox="0 0 8 10"><path d="M1.5 1h5v5h1.200v1.500h-7.400v-1.500h1.200z M3.500 7.500h1v3.500h-1z" fill="#4a4a4a"/></svg>
<svg style="left:881px;top:893px" width="12" height="16" viewBox="0 0 12 16"><path d="M1 .5l4.300 8.500" stroke="#6a6a6a" stroke-width="1.700"/><path d="M3.300 8.300l3.200-1.300l5.300 7.200q-2.500 .3-4.800 1.800l-3.400-.8q.8-3.400-.3-6.900z" fill="#f0ad58"/></svg>
<div class="a" style="left:901px;top:892px;width:18px;height:18px;background:#a9d1f5;border:1px solid #3c97e6;border-radius:2px"></div>
<svg style="left:903px;top:895px" width="14" height="12" viewBox="0 0 14 12"><rect x=".5" y=".500" width="11" height="9" fill="#fff" stroke="#2b7fd0"/><path d="M.5 2.500h11" stroke="#2b7fd0"/><rect x="4.500" y="5.500" width="9" height="6" fill="#fff" stroke="#2b7fd0" stroke-width=".9"/><path d="M4.500 5.500l4.500 3.500 4.500-3.500" fill="none" stroke="#2b7fd0" stroke-width=".8"/></svg>
<div class="a" style="left:876px;top:914px;width:510px;height:100px;background:#f9fafd;border:1px solid #d0d0d0"></div>
<div class="t " style="left:879px;top:916px;font-size:11.5px">COMSOL Multiphysics 6.0.0.318</div>
<div class="a" style="left:1396px;top:856px;width:521px;height:163px;border:1px solid #d2d2d2"></div>
<div class="ttl" style="left:1404.5px;top:863.5px;color:#2c5ba5;transform:scaleX(0.832)">Auxiliary Data</div>
<svg style="left:1874px;top:872px" width="8" height="5" viewBox="0 0 8 5"><path d="M0 0h8l-4 4.400z" fill="#333"/></svg>
<svg style="left:1889px;top:869px" width="8" height="10" viewBox="0 0 8 10"><path d="M1.5 1h5v5h1.200v1.500h-7.400v-1.500h1.200z M3.500 7.500h1v3.500h-1z" fill="#4a4a4a"/></svg>
<svg style="left:1904px;top:870px" width="9" height="9" viewBox="0 0 9 9"><path d="M0 0l9 9M9 0l-9 9" stroke="#333" stroke-width="1.200"/></svg>
<svg style="left:1411px;top:895px" width="14" height="14" viewBox="0 0 14 14"><path d="M12 7a5.500 5.500 0 1 1-2-4.200" fill="none" stroke="#2b7fd0" stroke-width="1.400"/><path d="M8.500 4.500h4.500v-4.500z" fill="#2b7fd0"/></svg>
<svg style="left:1434px;top:896px" width="15" height="11" viewBox="0 0 15 11"><path d="M1 1h2M4 1h10" stroke="#2b7fd0" stroke-width="1.500"/><path d="M2 7q5.500-5 11 0q-5.500 5-11 0z" fill="none" stroke="#2b7fd0" stroke-width="1.2"/><circle cx="7.500" cy="7" r="1.800" fill="#2b7fd0"/></svg>
<svg style="left:1456px;top:900px" width="8" height="5" viewBox="0 0 8 5"><path d="M0 0h8l-4 4.400z" fill="#222"/></svg>
<div class="a" style="left:1474px;top:895px;width:1px;height:15px;background:#c8c8c8"></div>
<div class="a" style="left:1528px;top:895px;width:1px;height:15px;background:#c8c8c8"></div>
<div class="a" style="left:1582px;top:895px;width:1px;height:15px;background:#c8c8c8"></div>
<svg style="left:1483px;top:895px" width="13" height="14" viewBox="0 0 13 14"><path d="M1 1h5M1 4h4M1 7h4M1 10h4M1 13h4" stroke="#c4c4c4" stroke-width="1.200"/><path d="M7 5h5v9h-5zM9 2l2 2.500h-4z" fill="none" stroke="#c4c4c4"/></svg>
<svg style="left:1505px;top:894px" width="16" height="16" viewBox="0 0 16 16"><path d="M0 2h5l1 1.500h6v3h-8l-3 5z" fill="#c4c4c4"/><path d="M4 7h11l-3 6h-11z" fill="#c4c4c4"/><circle cx="12" cy="12" r="3.500" fill="#e4e4e4" stroke="#c4c4c4"/></svg>
<svg style="left:1536px;top:896px" width="15" height="12" viewBox="0 0 15 12"><rect x=".5" y=".500" width="14" height="11" fill="none" stroke="#c4c4c4" stroke-width="1.200"/><path d="M.5 3h14" stroke="#c4c4c4"/><path d="M12 7.500h-7M7.500 5l-2.500 2.500 2.500 2.500" fill="none" stroke="#c4c4c4" stroke-width="1.300"/></svg>
<svg style="left:1560px;top:895px" width="14" height="14" viewBox="0 0 14 14"><circle cx="7" cy="7" r="5" fill="none" stroke="#c4c4c4" stroke-width="1.200" stroke-dasharray="6 2"/><circle cx="7" cy="7" r="1.500" fill="#c4c4c4"/><path d="M7 0l2 2-2 2zM7 14l-2-2 2-2z" fill="#c4c4c4"/></svg>
<svg style="left:1590px;top:895px" width="16" height="14" viewBox="0 0 16 14"><path d="M0 1h6l1.500 2h8.500v11h-16z" fill="#c4c4c4"/></svg>
<div class="a" style="left:1406px;top:918px;width:501px;height:93px;background:#f9fafd;border:1px solid #d0d0d0"></div>
<div class="a" style="left:1407px;top:919px;width:499px;height:26px;background:#f0f0f0"></div>
<div class="a" style="left:1426px;top:919px;width:1px;height:26px;background:#bdbdbd"></div>
<div class="a" style="left:1676px;top:919px;width:1px;height:26px;background:#bdbdbd"></div>
<div class="a" style="left:1836px;top:919px;width:1px;height:26px;background:#bdbdbd"></div>
<div class="a" style="left:1856px;top:919px;width:1px;height:26px;background:#bdbdbd"></div>
<div class="t " style="left:1432px;top:928px;">Node</div>
<div class="t " style="left:1682px;top:928px;">Property</div>
<div class="t " style="left:1862px;top:928px;">Source</div>
<div class="t " style="left:1241px;top:1032px;font-size:11.5px;letter-spacing:-0.45px">1.05 GB | 1.05 GB</div>
<svg style="left:230px;top:430px" width="664" height="134" viewBox="0 0 664 134"><ellipse cx="331.600" cy="66.900" rx="325.500" ry="58.900" fill="none" stroke="#fa0a0a" stroke-width="2.200"/></svg>
</body></html>
